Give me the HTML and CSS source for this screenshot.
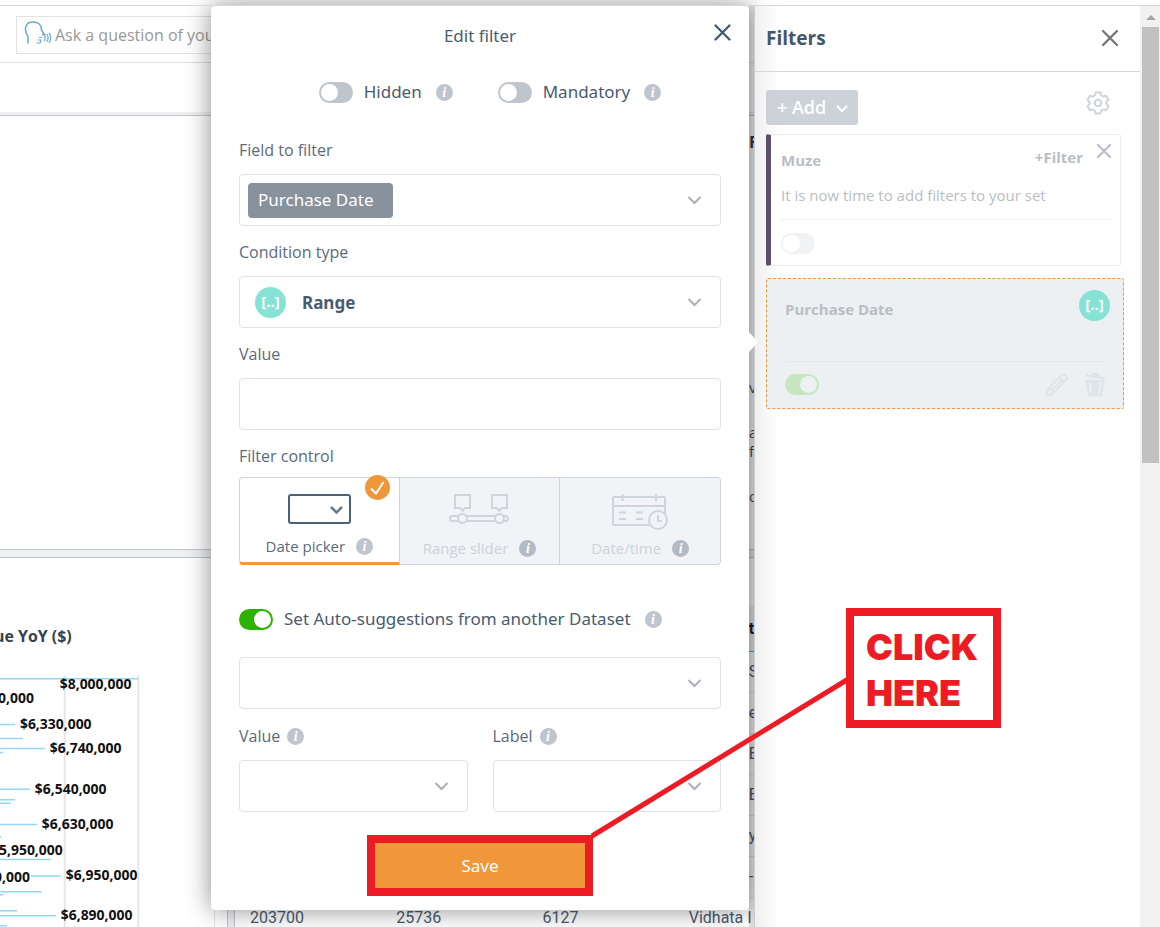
FILE: index.html
```html
<!DOCTYPE html>
<html lang="en">
<head>
    <meta charset="UTF-8">
    <meta name="viewport" content="width=device-width, initial-scale=1.0">
    <title>Edit filter</title>
    <link rel="stylesheet" href="styles.css">
</head>
<body>

<div class="app">
    <main class="dashboard">
        <div class="search-bar">
            <div class="search-box">
                <svg class="search-icon" width="27" height="24" viewBox="0 0 27 24" fill="none" stroke="#68a9cc" stroke-width="1.500">
                    <path d="M4 22.500v-7C-.5 9 1 1 9 1c6 0 8.500 4 8.500 8l3 4.500H18"/>
                    <path d="M12.500 22h3.500l1-3h-3M15 16.500h3M20 14c1.500 2 1.500 4 0 6M22.500 13c2 2.500 2 5.500 0 8M25 12c2 3 2 7 0 10" stroke-width="1.200"/>
                </svg>
                <input type="text" class="search-input" placeholder="Ask a question of your data" aria-label="Ask a question">
            </div>
        </div>
        <div class="toolbar"></div>

        <section class="widget-top">
            <h2 class="edge-title">F</h2>
            <p class="edge-text">v</p>
            <p class="edge-text">a<br>f</p>
            <p class="edge-text">or</p>
        </section>

        <div class="bottom-row">
            <section class="chart-widget">
                <svg class="chart" width="215" height="370" viewBox="0 557 215 370">
                    <g stroke="#e6e6e6" stroke-width="2">
                        <path d="M65 674V927M139 674V927"/>
                    </g>
                    <g stroke="#93d6f5" stroke-width="1.5">
                        <path d="M0 677.5H139M0 723.5H15M0 737.5H23M0 747.5H45M0 751.5H3M0 788.5H30M0 799H15M0 802.5H11M0 824H37M0 836.5H1M0 859H51M31 875.5H61M0 891.5H42M0 894.5H3M0 910.5H17M0 915.5H56M0 925.5H7"/>
                    </g>
                    <text class="chart-title" x="72" y="641">ue YoY ($)</text>
                    <g class="chart-labels">
                        <text x="132" y="688">$8,000,000</text>
                        <text x="34" y="702">0,000</text>
                        <text x="92" y="728">$6,330,000</text>
                        <text x="122" y="752">$6,740,000</text>
                        <text x="107" y="793">$6,540,000</text>
                        <text x="114" y="828">$6,630,000</text>
                        <text x="63" y="855">$5,950,000</text>
                        <text x="138" y="880">$6,950,000</text>
                        <text x="30" y="882">0,000</text>
                        <text x="133" y="920">$6,890,000</text>
                    </g>
                </svg>
            </section>
            <div class="splitter"></div>
            <section class="table-widget">
                <table class="data-table">
                    <thead>
                        <tr><th></th><th></th><th></th><th class="edge">t</th></tr>
                    </thead>
                    <tbody>
                        <tr><td></td><td></td><td></td><td class="edge">S</td></tr>
                        <tr><td></td><td></td><td></td><td class="edge">e</td></tr>
                        <tr><td></td><td></td><td></td><td class="edge">E</td></tr>
                        <tr><td></td><td></td><td></td><td class="edge">E</td></tr>
                        <tr><td></td><td></td><td></td><td class="edge">y</td></tr>
                        <tr><td></td><td></td><td></td><td class="edge">-</td></tr>
                        <tr><td>203700</td><td>25736</td><td>6127</td><td>Vidhata I</td></tr>
                    </tbody>
                </table>
            </section>
        </div>
    </main>

    <aside class="filters">
        <header class="filters-header">
            <h2>Filters</h2>
            <button type="button" class="icon-btn" aria-label="Close filters">
                <svg width="18" height="18" viewBox="0 0 18 18" fill="none" stroke="#777" stroke-width="2.4" stroke-linecap="round"><path d="M2 2l14 14M16 2L2 16"/></svg>
            </button>
        </header>
        <div class="filters-body">
            <div class="filters-actions">
                <button type="button" class="add-btn">+ Add
                    <svg width="12" height="8" viewBox="0 0 12 8" fill="none" stroke="#fff" stroke-width="2"><path d="M1 1l5 5 5-5"/></svg>
                </button>
                <button type="button" class="icon-btn" aria-label="Settings">
                    <svg width="24" height="24" viewBox="0 0 24 24" fill="none" stroke="#cfd4d9" stroke-width="2" stroke-linejoin="round">
                        <path d="M9.500 1.500q0 1.500-.8 3l-1.800 1q-1.500 0-3-.8L1.400 9q1.400.8 2.200 2.200v1.600q-.8 1.400-2.200 2.200l2.500 4.300q1.500-.8 3-.8l1.800 1q.8 1.500.8 3h5q0-1.500.8-3l1.800-1q1.500 0 3 .8l2.500-4.300q-1.400-.8-2.200-2.200v-1.600q.8-1.400 2.200-2.200l-2.500-4.300q-1.500.8-3 .8l-1.800-1q-.8-1.500-.8-3z"/>
                        <circle cx="12" cy="12" r="3.300"/>
                    </svg>
                </button>
            </div>

            <article class="set-card">
                <div class="set-head">
                    <h3>Muze</h3>
                    <button type="button" class="link-btn">+Filter</button>
                    <button type="button" class="icon-btn" aria-label="Remove set">
                        <svg width="16" height="16" viewBox="0 0 16 16" fill="none" stroke="#b9c0ca" stroke-width="2.200" stroke-linecap="round"><path d="M2 2l12 12M14 2L2 14"/></svg>
                    </button>
                </div>
                <p>It is now time to add filters to your set</p>
                <div class="card-foot">
                    <input type="checkbox" class="toggle toggle-faint" aria-label="Enable Muze">
                </div>
            </article>

            <article class="filter-card">
                <div class="filter-head">
                    <h3>Purchase Date</h3>
                    <span class="range-badge">[..]</span>
                </div>
                <div class="card-foot">
                    <input type="checkbox" class="toggle toggle-green-faint" aria-label="Enable Purchase Date" checked>
                    <button type="button" class="icon-btn" aria-label="Edit">
                        <svg width="24" height="24" viewBox="0 0 24 24" fill="none" stroke="#dfe4e8" stroke-width="2" stroke-linejoin="round"><path d="M1.500 22.500l2-7L17 2q2-1.500 4 .5t.5 4L8 20.500zM14.500 4.500l5 5M4 15l5 5M7 17L16.500 7.500"/></svg>
                    </button>
                    <button type="button" class="icon-btn" aria-label="Delete">
                        <svg width="20" height="24" viewBox="0 0 20 24" fill="none" stroke="#dfe4e8" stroke-width="2.500"><path d="M1 2.500l18 2.500M7 3V1h6v2M0 8h20M2 8l2 14h12l2-14M7 9l1 12M10 9v12M13 9l-1 12"/></svg>
                    </button>
                </div>
            </article>
        </div>
    </aside>

    <div class="scrollbar">
        <span class="scroll-arrow"></span>
        <span class="scroll-thumb"></span>
    </div>

    <form class="modal">
        <header class="modal-header">
            <h1>Edit filter</h1>
            <button type="button" class="icon-btn modal-close" aria-label="Close">
                <svg width="17" height="17" viewBox="0 0 17 17" fill="none" stroke="#44586e" stroke-width="2.300" stroke-linecap="round"><path d="M1.500 1.500l14 14M15.500 1.500l-14 14"/></svg>
            </button>
        </header>

        <div class="flags">
            <div class="flag">
                <input type="checkbox" class="toggle" id="hidden">
                <label for="hidden">Hidden</label>
                <span class="info">i</span>
            </div>
            <div class="flag">
                <input type="checkbox" class="toggle" id="mandatory">
                <label for="mandatory">Mandatory</label>
                <span class="info">i</span>
            </div>
        </div>

        <div class="field">
            <label for="fieldName">Field to filter</label>
            <div class="box">
                <select class="chip" id="fieldName"><option>Purchase Date</option></select>
                <svg class="chevron" viewBox="0 0 14 9"><path d="M1 1l6 6 6-6"/></svg>
            </div>
        </div>
        <div class="field">
            <label for="conditionType">Condition type</label>
            <div class="box box-range">
                <span class="range-badge">[..]</span>
                <select class="range-select" id="conditionType"><option>Range</option></select>
                <svg class="chevron" viewBox="0 0 14 9"><path d="M1 1l6 6 6-6"/></svg>
            </div>
        </div>
        <div class="field">
            <label for="value">Value</label>
            <input type="text" class="box" id="value">
        </div>

        <fieldset class="control">
            <legend>Filter control</legend>
            <div class="control-cards">
                <label class="control-card selected">
                    <input type="radio" name="control" checked>
                    <svg width="63" height="30" viewBox="0 0 63 30" fill="none" stroke="#4d6075" stroke-width="2"><rect x="1" y="1" width="61" height="28" rx="2"/><path d="M43 13l5.500 5.500L54 13" stroke-width="2.500" stroke="#66788a"/></svg>
                    <span class="control-name">Date picker <span class="info">i</span></span>
                    <span class="tick"><svg width="15" height="14" viewBox="0 0 15 14" fill="none" stroke="#fff" stroke-width="2"><path d="M1 7.500l5 5L13.500 1"/></svg></span>
                </label>
                <label class="control-card">
                    <input type="radio" name="control" disabled>
                    <svg width="60" height="30" viewBox="0 0 60 30" fill="#f1f3f7" stroke="#cdd4dc" stroke-width="2">
                        <rect x="1" y="22" width="58" height="5" rx="2.500"/>
                        <path d="M6 1h15v13h-5l-2.500 2.500L11 14H6zM43 1h15v13h-5l-2.500 2.500L48 14h-5z"/>
                        <circle cx="13.500" cy="24.500" r="4.500"/><circle cx="50.500" cy="24.500" r="4.500"/>
                    </svg>
                    <span class="control-name">Range slider <span class="info info-dark">i</span></span>
                </label>
                <label class="control-card">
                    <input type="radio" name="control" disabled>
                    <svg width="56" height="36" viewBox="0 0 56 36" fill="none" stroke="#cdd4dc" stroke-width="2">
                        <rect x="1" y="3" width="52" height="28" rx="1"/>
                        <path d="M1 12h52M10.500 0v7M44 0v7M7 18.500h7M7 25h7M24 18.500h7M24 25h7"/>
                        <circle cx="46" cy="26" r="9" fill="#f1f3f7"/><path d="M46 21v6h4"/>
                    </svg>
                    <span class="control-name">Date/time <span class="info info-dark">i</span></span>
                </label>
            </div>
        </fieldset>

        <div class="suggest">
            <input type="checkbox" class="toggle toggle-green" id="suggest" checked>
            <label for="suggest">Set Auto-suggestions from another Dataset</label>
            <span class="info">i</span>
        </div>
        <div class="box">
            <select aria-label="Dataset"></select>
            <svg class="chevron" viewBox="0 0 14 9"><path d="M1 1l6 6 6-6"/></svg>
        </div>

        <div class="pair">
            <div class="field">
                <label for="valueColumn">Value <span class="info">i</span></label>
                <div class="box">
                    <select id="valueColumn"></select>
                    <svg class="chevron" viewBox="0 0 14 9"><path d="M1 1l6 6 6-6"/></svg>
                </div>
            </div>
            <div class="field">
                <label for="labelColumn">Label <span class="info">i</span></label>
                <div class="box">
                    <select id="labelColumn"></select>
                    <svg class="chevron" viewBox="0 0 14 9"><path d="M1 1l6 6 6-6"/></svg>
                </div>
            </div>
        </div>

        <button type="submit" class="save-btn">Save</button>
    </form>

    <!-- callout pointing at the save button -->
    <svg class="callout-line" width="264" height="166" viewBox="0 0 264 166" stroke="#ed1c24" stroke-width="5"><path d="M2 163L260 5"/></svg>
    <div class="callout">CLICK<br>HERE</div>
</div>

</body>
</html>
```
FILE: styles.css
```css
* { margin: 0; padding: 0; box-sizing: border-box; }

body { background: #fff; color: #4a5b70; font-family: "Open Sans", "Noto Sans", sans-serif; font-size: 16px; overflow: hidden; }

button, input, select { font: inherit; color: inherit; border: 0; background: none; outline: 0; }
button { cursor: pointer; }
select { appearance: none; }
h1, h2, h3 { font-weight: 400; }

.app { position: relative; display: grid; grid-template-columns: minmax(0, 1fr) 386px 20px; height: 100vh; padding-top: 5px; overflow: hidden; }
.app::before { content: ""; position: absolute; top: 5px; left: 0; right: 0; height: 1px; background: #d5d9dc; z-index: 5; }

/* Dashboard behind the dialog */
.dashboard { position: relative; display: flex; flex-direction: column; min-width: 0; overflow: hidden; }
.dashboard::after { content: ""; position: absolute; top: 0; bottom: 0; right: 0; width: 5px; background: rgba(0, 0, 0, 0.12); }

.search-bar { height: 58px; padding: 11px 16px 9px; border-bottom: 1px solid #dcdfe1; }
.search-box { display: flex; align-items: center; gap: 4px; width: 300px; height: 38px; padding-left: 7px; border: 1px solid #e2e2e2; }
.search-icon { flex: none; margin-top: -4px; }
.search-input { flex: 1; min-width: 0; }
.search-input::placeholder { color: #999; opacity: 1; }
.toolbar { height: 53px; border-bottom: 1px solid #c4c7cd; box-shadow: inset 0 -3px #eef0f2; }

.widget-top { flex: none; height: 434px; padding: 15px 0 0 calc(100% - 5px); overflow: hidden; white-space: nowrap; }
.edge-title { font-size: 16px; font-weight: 700; line-height: 22px; margin-bottom: 225px; color: #333c48; }
.edge-text { font-size: 15px; line-height: 19px; margin-bottom: 26px; color: #555; }

.bottom-row { flex: 1; display: flex; min-height: 0; border-top: 7px solid #eef0f2; outline: 1px solid #c0c4cc; }
.chart-widget { width: 227px; flex: none; border-top: 1px solid #c0c4cc; }
.chart { display: block; border-right: 1px solid #e4e4e4; overflow: hidden; }
.chart-title { font-size: 16px; font-weight: 700; fill: #36414d; text-anchor: end; }
.chart-labels { font-size: 14px; font-weight: 700; fill: #111; text-anchor: end; }
.splitter { width: 8px; flex: none; background: #eef0f2; border: solid #c0c4cc; border-width: 0 1px; }
.table-widget { flex: 1; min-width: 0; padding-top: 48px; border-top: 1px solid #c0c4cc; overflow: hidden; }

.data-table { width: 585px; table-layout: fixed; border-collapse: collapse; font-family: Roboto, sans-serif; }
.data-table th { height: 45px; background: #f1f3f7; border-bottom: 1px solid #37b6d1; color: #222; text-align: left; }
.data-table td { height: 41px; padding-left: 15px; border-bottom: 1px solid #e6e8ea; white-space: nowrap; }
.data-table .edge { padding-left: 75px; }

/* Filters panel */
.filters { position: relative; z-index: 3; background: linear-gradient(to right, #efefef, #fff 24px); border-left: 1px solid #c9ccd0; }
/* arrow of the dialog pointing at the active filter */
.filters::before { content: ""; position: absolute; top: 327px; left: -6px; border: solid transparent; border-width: 10px 0 10px 9px; border-left-color: #fff; }
.filters-header { display: flex; align-items: center; justify-content: space-between; height: 67px; padding: 0 21px 0 11px; border-bottom: 1px solid #d2d7da; }
.filters-header h2 { font-size: 19px; font-weight: 700; color: #44566c; }
.filters-body { padding: 18px 16px 0 11px; }
.filters-actions { display: flex; align-items: center; justify-content: space-between; padding-right: 14px; margin-bottom: 9px; }
.icon-btn svg { display: block; }
.filters-actions .icon-btn { margin-bottom: 10px; }

.add-btn { display: flex; align-items: center; gap: 10px; height: 35px; padding: 0 10px 2px 11px; border-radius: 3px; background: #cdd2d9; color: #fff; font-size: 18px; font-weight: 600; }
.add-btn svg { margin-top: 5px; }

.set-card { height: 132px; margin-right: 3px; padding: 7px 8px 0 10px; border: 1px solid #ebeef1; border-left: 5px solid #5c4f6d; border-radius: 2px; color: #b9bec3; font-size: 15px; background: #fff; }
.set-head { display: flex; align-items: center; height: 30px; }
.set-head h3, .filter-head h3 { flex: 1; font-size: 15px; font-weight: 700; }
.set-head h3 { padding-top: 5px; }
.set-head .icon-btn { margin: -13px 0 0 13px; }
.link-btn { font-weight: 700; font-size: 15px; }
.set-card p { height: 48px; padding-top: 13px; border-bottom: 1px solid #f2f3f5; line-height: 20px; }
.card-foot { display: flex; align-items: center; gap: 16px; height: 46px; }
.card-foot .toggle { margin-right: auto; }

.filter-card { height: 131px; margin-top: 12px; padding: 11px 18px 0; border: 1px dashed #f0973a; border-radius: 2px; background: #ecf0f3; color: #b9bec3; }
.filter-head { display: flex; align-items: flex-start; height: 71px; margin-right: -5px; }
.filter-head h3 { padding-top: 9px; }
.filter-card .card-foot { border-top: 1px solid #e4e8ea; }

.range-badge { flex: none; width: 31px; height: 31px; border-radius: 50%; background: #86e2d5; color: #fff; font-size: 15px; font-weight: 700; line-height: 28px; text-align: center; }

.scrollbar { position: relative; z-index: 3; padding: 22px 1px 0 2px; background: #f1f1f1; }
.scroll-arrow { position: absolute; top: 10px; left: 6px; border: solid transparent; border-width: 0 5px 5px; border-bottom-color: #a3a3a3; }
.scroll-thumb { display: block; height: 436px; background: #c1c1c1; }

/* Dialog */
.modal { position: absolute; top: 6px; left: 211px; right: 411px; z-index: 2; display: flex; flex-direction: column; padding: 0 28px 14px; border-radius: 4px; background: #fff; box-shadow: 0 0 26px rgba(0, 0, 0, 0.45); }
.modal-header { position: relative; }
.modal-header h1 { font-family: "Noto Sans", sans-serif; font-size: 17px; line-height: 60px; text-align: center; }
.modal-close { position: absolute; top: 18px; right: -10px; }

.flags { display: flex; justify-content: center; gap: 45px; margin: 14px 0 34px 20px; }
.flags, .suggest { font-family: "Noto Sans", sans-serif; font-size: 17px; line-height: 24px; }
.flag, .suggest { display: flex; align-items: center; }
.flag .toggle, .suggest .toggle { margin-right: 11px; }
.flag .info, .suggest .info { margin-left: 14px; }

.toggle { appearance: none; flex: none; width: 34px; height: 21px; padding: 2px; border-radius: 11px; background: #bfc5cd; }
.toggle::before { content: ""; display: block; width: 17px; height: 17px; border-radius: 50%; background: #fff; }
.toggle:checked::before { margin-left: auto; }
.toggle-green { background: #2db200; }
.toggle-faint { background: #f1f2f4; }
.toggle-green-faint { background: #c6e5c1; }
.toggle-green-faint::before { background: #edf1f4; }

.info { display: inline-block; flex: none; width: 17px; height: 17px; border-radius: 50%; background: #bfc5cd; color: #fff; font: italic bold 14px/17px "Liberation Serif", serif; text-align: center; }
.info-dark { background: #b3bac4; }

.field { margin-bottom: 14px; }
.field > label, .control legend { display: flex; align-items: center; gap: 7px; height: 24px; margin-bottom: 12px; color: #5a6a7d; }
.box { display: flex; align-items: center; width: 100%; height: 52px; padding: 0 18px 0 8px; border: 1px solid #dfe2e9; border-radius: 4px; background: #fff; }
.box select { flex: 1; min-width: 0; height: 100%; font-family: "Noto Sans", sans-serif; font-size: 17px; }
.box .chip { flex: none; width: 145px; height: 35px; padding: 0 0 1px 10px; border-radius: 4px; background: #87929d; color: #fff; }
.box-range { padding-left: 15px; }
.box .range-select { padding-left: 16px; font-weight: 700; }
.chevron { flex: none; width: 15px; height: 9px; margin-left: auto; fill: none; stroke: #abb0b8; stroke-width: 2; }

.control { border: 0; margin-bottom: 42px; }
.control legend { margin-bottom: 9px; }
.control-cards { display: grid; grid-template-columns: repeat(3, 1fr); }
.control-card { position: relative; display: flex; flex-direction: column; align-items: center; justify-content: space-between; height: 88px; padding: 16px 0 5px; border: 1px solid #cfd5db; border-left-width: 0; background: #f1f3f7; color: #cdd2d8; font-size: 15px; }
.control-card:last-child { border-radius: 0 4px 4px 0; }
.control-card input { position: absolute; opacity: 0; }
.control-card.selected { border-left-width: 1px; border-bottom: 3px solid #f0973a; border-radius: 4px 0 0 4px; background: #fff; color: #5a6a7d; }
.control-name { display: flex; align-items: center; gap: 11px; line-height: 22px; }
.tick { position: absolute; top: -3px; right: 9px; display: grid; place-items: center; width: 25px; height: 25px; border-radius: 50%; background: #f0973a; }

.suggest { margin-bottom: 26px; }
.pair { display: grid; grid-template-columns: 1fr 1fr; gap: 25px; margin-top: 15px; }
.pair .field { margin-bottom: 23px; }

.save-btn { align-self: center; width: 226px; height: 61px; border: 8px solid #ed1c24; background: #f0973a; color: #fff; font-family: "Noto Sans", sans-serif; font-size: 17px; }

.callout { position: absolute; z-index: 4; top: 608px; right: 159px; width: 155px; height: 120px; padding: 8px 0 0 12px; border: 8px solid #ed1c24; background: #fff; color: #ed1c24; font: 900 36px/46px Inter, "Liberation Sans", sans-serif; }
.callout-line { position: absolute; z-index: 4; top: 673px; right: 306px; }
```
